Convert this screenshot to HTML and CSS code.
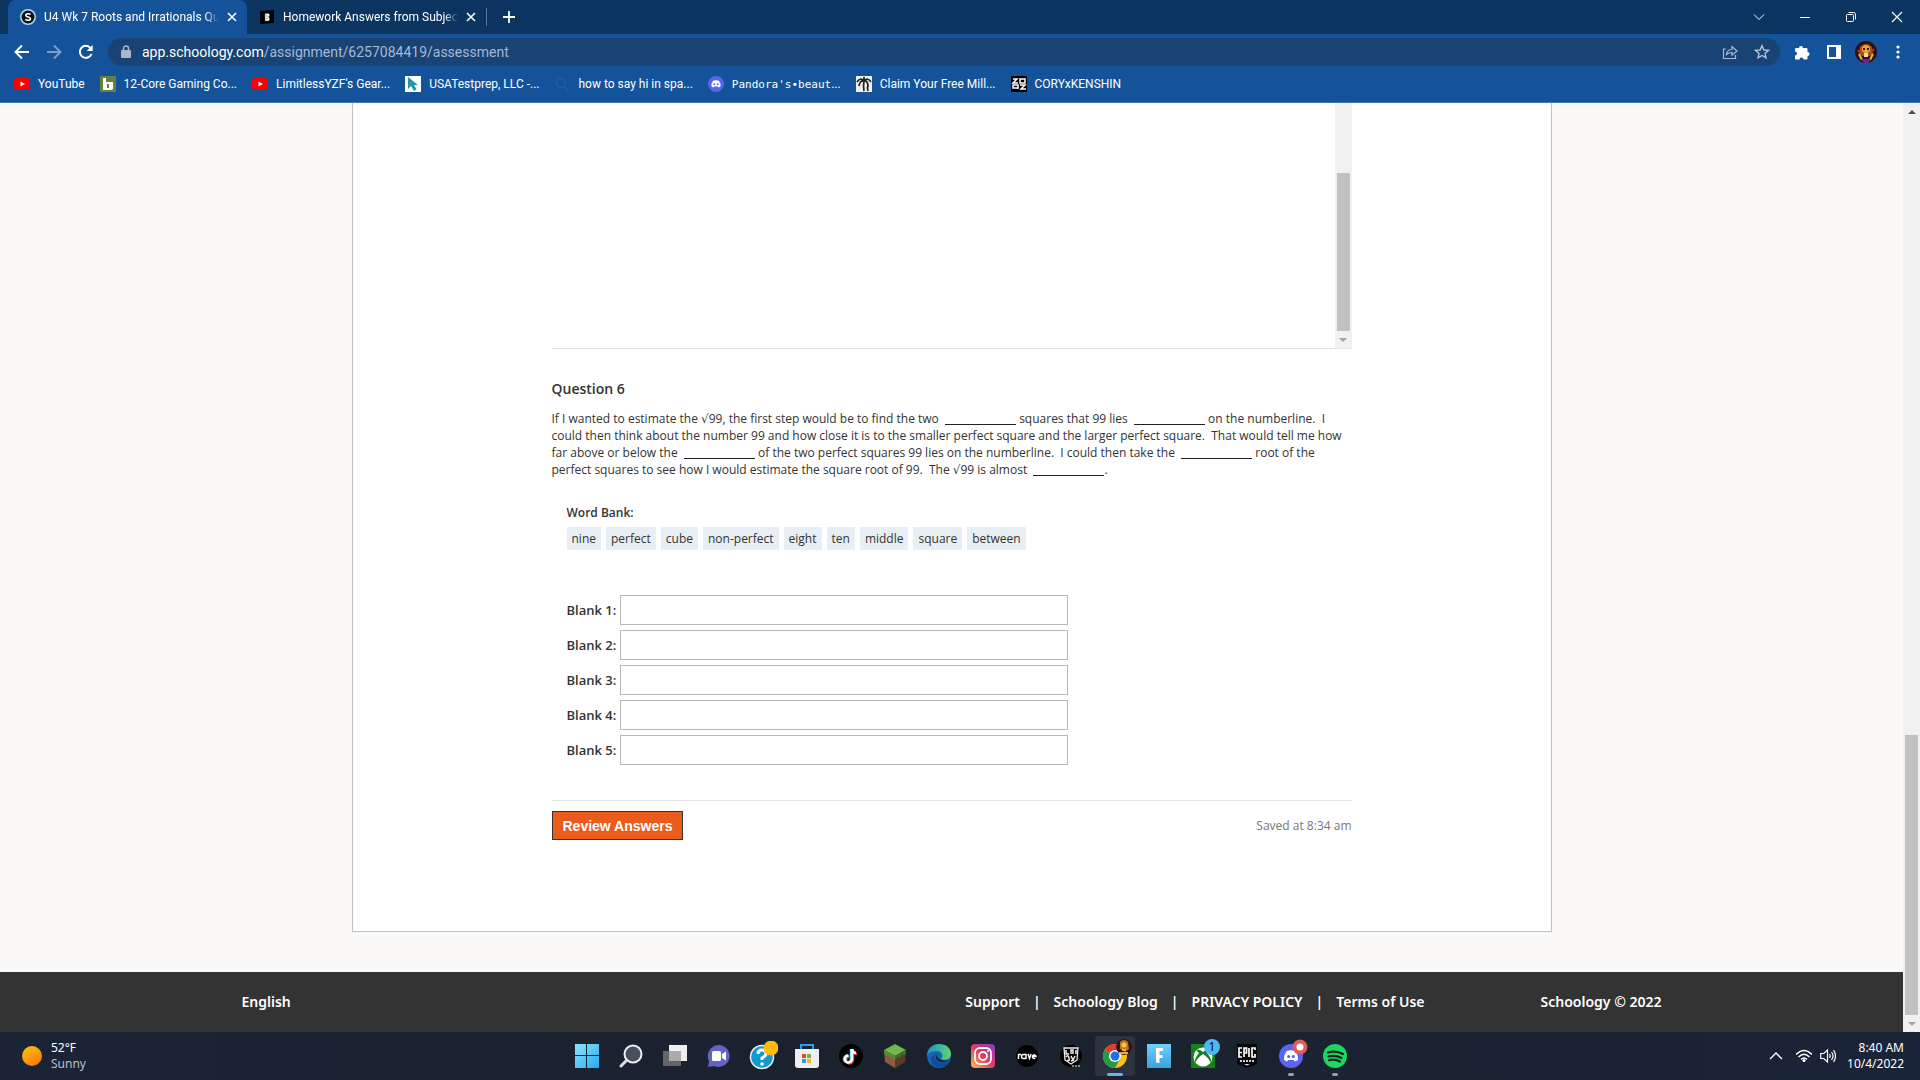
FILE: index.html
```html
<!DOCTYPE html>
<html lang="en">
<head>
    <meta charset="UTF-8">
    <meta name="viewport" content="width=device-width, initial-scale=1.0">
    <title>U4 Wk 7 Roots and Irrationals Quiz</title>
    <link rel="stylesheet" href="styles.css">
</head>
<body>

    <header class="browser">
        <div class="tab-strip">
            <div class="tab active">
                <svg class="icon16" viewBox="0 0 16 16"><circle cx="8" cy="8" r="8" fill="#a9dcf5"/><circle cx="8" cy="8" r="6.5" fill="#111"/><path d="M10.6 5.6C9.6 4.4 5.8 4.3 5.8 6.3c0 2 4.7 1.3 4.7 3.4 0 2.1-4 2-5.1.6" fill="none" stroke="#fff" stroke-width="1.6"/></svg>
                <span class="tab-title">U4 Wk 7 Roots and Irrationals Qu</span>
                <button class="tab-close" aria-label="Close tab"><svg viewBox="0 0 10 10"><path d="M1 1l8 8M9 1l-8 8" stroke="#fff" stroke-width="1.6"/></svg></button>
            </div>
            <div class="tab">
                <svg class="icon16" viewBox="0 0 16 16"><path d="M1 2l14-1v13L1 15z" fill="#000"/><path d="M6 4.500h3.500l1 1v1.500l-1 1 1 1v2l-1 1H6zM7 7h2M7 9.500h2" fill="#fff" stroke="#555" stroke-width=".6"/></svg>
                <span class="tab-title">Homework Answers from Subject</span>
                <button class="tab-close" aria-label="Close tab"><svg viewBox="0 0 10 10"><path d="M1 1l8 8M9 1l-8 8" stroke="#fff" stroke-width="1.6"/></svg></button>
            </div>
            <button class="new-tab" aria-label="New tab"><svg viewBox="0 0 12 12"><path d="M6 0v12M0 6h12" stroke="#fff" stroke-width="1.8"/></svg></button>
            <div class="window-controls">
                <button aria-label="Search tabs"><svg viewBox="0 0 12 12"><path d="M1 3.500l5 5 5-5" fill="none" stroke="#fff"/></svg></button>
                <button aria-label="Minimize"><svg viewBox="0 0 12 12"><path d="M1 6.500h10" stroke="#fff"/></svg></button>
                <button aria-label="Restore"><svg viewBox="0 0 12 12"><rect x="1.500" y="3.500" width="7" height="7" rx="1" fill="none" stroke="#fff"/><path d="M3.500 1.500h5a2 2 0 0 1 2 2v5" fill="none" stroke="#fff"/></svg></button>
                <button aria-label="Close"><svg viewBox="0 0 12 12"><path d="M1 1l10 10M11 1L1 11" stroke="#fff" stroke-width="1.200"/></svg></button>
            </div>
        </div>

        <div class="toolbar">
            <button class="nav" aria-label="Back"><svg viewBox="0 0 16 16"><path d="M15 8H2M8 1.500L1.500 8 8 14.500" fill="none" stroke="#fff" stroke-width="1.900"/></svg></button>
            <button class="nav" aria-label="Forward"><svg viewBox="0 0 16 16"><path d="M1 8h13M8 1.500L14.500 8 8 14.500" fill="none" stroke="#7f9ec9" stroke-width="1.900"/></svg></button>
            <button class="nav" aria-label="Reload"><svg viewBox="0 0 16 16"><path d="M13.500 10A6 6 0 1 1 12.500 4" fill="none" stroke="#fff" stroke-width="2"/><path d="M14.700 1v6H8.700z" fill="#fff"/></svg></button>
            <div class="omnibox">
                <svg class="lock" viewBox="0 0 12 14"><rect x="1" y="5" width="10" height="8" rx="1" fill="#aab7c9"/><path d="M3.500 5V3.500a2.500 2.500 0 0 1 5 0V5" fill="none" stroke="#aab7c9" stroke-width="1.500"/></svg>
                <span class="url">app.schoology.com<span class="path">/assignment/6257084419/assessment</span></span>
                <svg class="icon16" viewBox="0 0 16 16"><path d="M4 5H1.500v9.500h12V11" fill="none" stroke="#a9bbd3" stroke-width="1.200"/><path d="M4.500 10.500c.3-3.500 2.500-5 5.500-5V2.500L15 7l-5 4.200V8.500c-2.500 0-4 .5-5.500 2z" fill="none" stroke="#a9bbd3" stroke-width="1.200"/></svg>
                <svg class="icon16" viewBox="0 0 16 16"><path d="M8 1.800l1.900 4.200 4.500.4-3.400 3 1 4.500L8 11.500l-4 2.400 1-4.500-3.400-3 4.500-.4z" fill="none" stroke="#b4c4d8" stroke-width="1.400"/></svg>
            </div>
            <button class="nav" aria-label="Extensions"><svg viewBox="0 0 16 16"><path d="M5 4a2 2 0 0 1 4 0h3.500a1 1 0 0 1 1 1v3a2 2 0 0 1 0 4v2.500a1 1 0 0 1-1 1H9.500a2 2 0 0 0-4 0H2a1 1 0 0 1-1-1V11.500a2 2 0 0 0 0-4V5a1 1 0 0 1 1-1z" fill="#fff"/></svg></button>
            <button class="nav" aria-label="Side panel"><svg viewBox="0 0 16 16"><rect x="2" y="2" width="12" height="12" fill="none" stroke="#fff" stroke-width="2"/><path d="M10 2h4v12h-4z" fill="#fff"/></svg></button>
            <button class="nav avatar" aria-label="Profile"><svg viewBox="0 0 22 22"><circle cx="11" cy="11" r="11" fill="#2a1119"/><path d="M5 6q6-6 12 0l1 7-3 2H7l-3-2z" fill="#a0521c"/><circle cx="11" cy="8" r="4" fill="#e6a532"/><path d="M8 7h2v2H8zM12 7h2v2h-2z" fill="#46130e"/><path d="M4 13l3 6M18 13l-3 6" stroke="#e8b43a" stroke-width="2"/><path d="M9 12h4v4H9z" fill="#f5d79d"/><path d="M6 18h10l-3 4H9z" fill="#75209b"/><path d="M3 9l2 3M19 8l-2 3" stroke="#bb2b26" stroke-width="2"/></svg></button>
            <button class="nav" aria-label="Menu"><svg viewBox="0 0 16 16"><g fill="#fff"><circle cx="8" cy="3" r="1.600"/><circle cx="8" cy="8" r="1.600"/><circle cx="8" cy="13" r="1.600"/></g></svg></button>
        </div>

        <nav class="bookmarks">
            <a href="#"><svg class="icon16" viewBox="0 0 16 16"><rect y="2" width="16" height="12" rx="3" fill="#f00"/><path d="M6.500 5.500v5L11 8z" fill="#fff"/></svg><span>YouTube</span></a>
            <a href="#"><svg class="icon16" viewBox="0 0 16 16"><path d="M0 0h16v16H0z" fill="#66803f"/><path d="M3 2h3v4h7v7l-2 1H3z" fill="#fff"/><path d="M7 8h2v4H7z" fill="#66803f"/></svg><span>12-Core Gaming Co...</span></a>
            <a href="#"><svg class="icon16" viewBox="0 0 16 16"><rect y="2" width="16" height="12" rx="3" fill="#f00"/><path d="M6.500 5.500v5L11 8z" fill="#fff"/></svg><span>LimitlessYZF's Gear...</span></a>
            <a href="#"><svg class="icon16" viewBox="0 0 16 16"><path d="M0 0h16v16H0z" fill="#fff"/><path d="M3 1v12l3-3 3 5 2.500-1.500L9 9h4z" fill="#2396a8"/></svg><span>USATestprep, LLC -...</span></a>
            <a href="#"><svg class="icon16" viewBox="0 0 16 16"><circle cx="7" cy="7" r="4.500" fill="none" stroke="#1262b2" stroke-width="1.500"/><path d="M10 10l4 4" stroke="#1262b2" stroke-width="1.500"/></svg><span>how to say hi in spa...</span></a>
            <a href="#"><svg class="icon16" viewBox="0 0 16 16"><circle cx="8" cy="8" r="8" fill="#5865f2"/><path d="M5 4.800q3-1 6 0Q12.800 7.500 12.500 10.500L10.500 11.500 9.800 10.500H6.200L5.500 11.500 3.500 10.500Q3.200 7.500 5 4.800z" fill="#fff"/><circle cx="6.400" cy="8.300" r="1" fill="#5865f2"/><circle cx="9.600" cy="8.300" r="1" fill="#5865f2"/></svg><span><span class="mono">Pandora's•beaut</span>...</span></a>
            <a href="#"><svg class="icon16" viewBox="0 0 16 16"><path d="M0 0h16v16H0z" fill="#eee"/><path d="M8 5q-1 5 0 10M8 5Q4 1 1 6M8 5Q4 4 3 10M8 5q4-4 7 1M8 5q4-1 4 6M8 5V1M12 8q-1 4 0 7" fill="none" stroke="#222" stroke-width="1.700"/></svg><span>Claim Your Free Mill...</span></a>
            <a href="#"><svg class="icon16" viewBox="0 0 16 16"><path d="M0 0h16v16H0z" fill="#000"/><path d="M2 3h4L2 7h5M9 3h5v4H9zM7 13V9H2v3h5M9 9h5l-4 4h5" fill="none" stroke="#fff" stroke-width="1.500"/></svg><span>CORYxKENSHIN</span></a>
        </nav>
    </header>

    <div class="viewport">
        <div class="page">
            <main class="card">
                <div class="quiz">
                    <div class="question-frame">
                        <div class="scrollbar">
                            <div class="track"><div class="thumb"></div></div>
                            <div class="arrow down"></div>
                        </div>
                    </div>

                    <h2>Question 6</h2>
                    <p class="prompt">If I wanted to estimate the <span class="root">√</span>99, the first step would be to find the two&nbsp; <span class="gap"></span> squares that 99 lies&nbsp; <span class="gap"></span> on the numberline.&nbsp; I could then think about the number 99 and how close it is to the smaller perfect square and the larger perfect square.&nbsp; That would tell me how far above or below the&nbsp; <span class="gap"></span> of the two perfect squares 99 lies on the numberline.&nbsp; I could then take the&nbsp; <span class="gap"></span> root of the perfect squares to see how I would estimate the square root of 99.&nbsp; The <span class="root">√</span>99 is almost&nbsp; <span class="gap"></span>.</p>

                    <section class="answers">
                        <h3>Word Bank:</h3>
                        <ul class="word-bank">
                            <li>nine</li>
                            <li>perfect</li>
                            <li>cube</li>
                            <li>non-perfect</li>
                            <li>eight</li>
                            <li>ten</li>
                            <li>middle</li>
                            <li>square</li>
                            <li>between</li>
                        </ul>

                        <div class="blank"><label for="blank1">Blank 1:</label><input type="text" id="blank1"></div>
                        <div class="blank"><label for="blank2">Blank 2:</label><input type="text" id="blank2"></div>
                        <div class="blank"><label for="blank3">Blank 3:</label><input type="text" id="blank3"></div>
                        <div class="blank"><label for="blank4">Blank 4:</label><input type="text" id="blank4"></div>
                        <div class="blank"><label for="blank5">Blank 5:</label><input type="text" id="blank5"></div>
                    </section>

                    <div class="submit-row">
                        <button class="review">Review Answers</button>
                        <span class="saved">Saved at 8:34 am</span>
                    </div>
                </div>
            </main>

            <footer class="site-footer">
                <div class="footer-inner">
                    <a href="#">English</a>
                    <nav class="footer-links">
                        <a href="#">Support</a><span>|</span>
                        <a href="#">Schoology Blog</a><span>|</span>
                        <a href="#">PRIVACY POLICY</a><span>|</span>
                        <a href="#">Terms of Use</a>
                    </nav>
                    <span>Schoology © 2022</span>
                </div>
            </footer>
        </div>
        <div class="scrollbar page-scroll">
            <div class="arrow up"></div>
            <div class="track"><div class="thumb"></div></div>
            <div class="arrow down"></div>
        </div>
    </div>

    <div class="taskbar">
        <div class="weather">
            <span class="sun"></span>
            <div>52°F<br><span class="sky">Sunny</span></div>
        </div>

        <div class="apps">
            <button aria-label="Start"><svg viewBox="0 0 24 24"><defs><linearGradient id="win" x2="1" y2="1"><stop stop-color="#8be4ff"/><stop offset="1" stop-color="#28a8f0"/></linearGradient></defs><path d="M0 0h11v11H0zM12 0h12v11H12zM0 12h11v12H0zM12 12h12v12H12z" fill="url(#win)"/></svg></button>
            <button aria-label="Search"><svg viewBox="0 0 24 24"><path d="M8 16l-6 6" stroke="#ddd" stroke-width="3" stroke-linecap="round"/><circle cx="14" cy="10" r="8.500" fill="#47505d" stroke="#eee" stroke-width="2"/></svg></button>
            <button aria-label="Task view"><svg viewBox="0 0 24 24"><path d="M6 1h18v16H6z" fill="#eee"/><path d="M0 7h18v15H0z" fill="#777" opacity=".8"/><path d="M6 7h12v10H6z" fill="#aaa"/></svg></button>
            <button aria-label="Chat"><svg viewBox="0 0 24 24"><path d="M12 1a11 11 0 1 1-5 21L1 23l1-6A11 11 0 0 1 12 1z" fill="#6263c5"/><rect x="5" y="7" width="9" height="10" rx="1.500" fill="#fff"/><path d="M15 10l4-2.500v9L15 14z" fill="#fff"/></svg></button>
            <button aria-label="Get help"><svg class="wide" viewBox="0 0 30 30"><circle cx="14" cy="16" r="11.500" fill="#1299cf" stroke="#eee" stroke-width="1.500"/><path d="M10 13q0-4 4-4t4 3.500q0 2.500-4 4.500v2" fill="none" stroke="#fff" stroke-width="3"/><circle cx="14" cy="23" r="1.800" fill="#fff"/><circle cx="23" cy="7" r="7.500" fill="#ffb90f"/></svg></button>
            <button aria-label="Store"><svg viewBox="0 0 24 24"><path d="M6 6V1h12v5" fill="none" stroke="#2aa0e8" stroke-width="2"/><path d="M0 5h24v16a3 3 0 0 1-3 3H3a3 3 0 0 1-3-3z" fill="#eee"/><path d="M7 10h4v4H7z" fill="#e34c2a"/><path d="M12 10h4v4h-4z" fill="#73b52c"/><path d="M7 15h4v4H7z" fill="#2a9fdf"/><path d="M12 15h4v4h-4z" fill="#f5b81c"/></svg></button>
            <button aria-label="TikTok"><svg viewBox="0 0 24 24"><circle cx="12" cy="12" r="12" fill="#000"/><g fill="none" stroke-width="2.500"><path d="M13 5v10a3.500 3.500 0 1 1-3.500-3.500M13 5q1 4 4 4" stroke="#f33757" transform="translate(1 1)"/><path d="M12 5v10a3.500 3.500 0 1 1-3.500-3.500" stroke="#48e9e4"/><path d="M13 5v10a3.500 3.500 0 1 1-3.500-3.500M13 5q1 4 4 4" stroke="#fff"/></g></svg></button>
            <button aria-label="Minecraft"><svg viewBox="0 0 24 24"><path d="M12 0l11 6-11 6L1 6z" fill="#72b74c"/><path d="M1 6l11 6v12L2 18z" fill="#8b5b40"/><path d="M23 6l-11 6v12l10-6z" fill="#5d3a27"/><path d="M1 6l11 6v4l-3-3-2 1-2-3-2 1-2-3z" fill="#518d36"/><path d="M23 6l-11 6v4l3-3 2 1 2-4 3 1z" fill="#3f712c"/></svg></button>
            <button aria-label="Edge"><svg viewBox="0 0 24 24"><defs><linearGradient id="edge" x2="1"><stop stop-color="#1b8dd8"/><stop offset="1" stop-color="#61d867"/></linearGradient></defs><circle cx="12" cy="12" r="12" fill="#1765b6"/><path d="M0 12C0 4 6 0 12 0c7 0 12 4 12 10 0 5-6 7-10 5 3-3 1-8-4-8C5 7 1 9 0 12z" fill="url(#edge)"/><path d="M10 10c-4 4-1 9 5 9 4 0 6-1 8-3-4 10-17 9-19 1 0-4 3-7 6-7z" fill="#154a98"/><path d="M11 10q-2 3 1 5 5 3 11 0-4 4-9 3c-6-1-6-6-3-8z" fill="#1c2330"/></svg></button>
            <button aria-label="Instagram"><svg viewBox="0 0 24 24"><defs><linearGradient id="insta" x1="0" y1="1" x2="1" y2="0"><stop stop-color="#fdc24b"/><stop offset=".5" stop-color="#e23965"/><stop offset="1" stop-color="#7d3bd0"/></linearGradient></defs><rect width="24" height="24" rx="4" fill="url(#insta)"/><rect x="4" y="4" width="16" height="16" rx="5" fill="none" stroke="#fff" stroke-width="1.800"/><circle cx="12" cy="12" r="4" fill="none" stroke="#fff" stroke-width="1.800"/><circle cx="17" cy="7" r="1" fill="#fff"/></svg></button>
            <button aria-label="Rave"><svg viewBox="0 0 24 24"><circle cx="12" cy="12" r="11" fill="#000"/><path d="M3.500 15v-4.500h2.500M11 15v-4.500H8.500a2 2 0 0 0 0 4h2.500M13 10l1.500 4.500L16 10M18 12.500h3a1.800 1.800 0 1 0-.8 1.800" fill="none" stroke="#fff" stroke-width="1.500"/></svg></button>
            <button aria-label="Beta app"><svg viewBox="0 0 24 24"><circle cx="12" cy="12" r="11" fill="#000"/><path d="M5 4h14l-1 12-6 4-6-4z" fill="none" stroke="#eee" stroke-width="1.300"/><path d="M7 6v4h3M12 10V6h2v4M17 6v4M7 13q2-3 3 1t-2 2M12 12l2 4 2-4M12 17l3-1" fill="none" stroke="#eee" stroke-width="1.500"/><path d="M13 22h9" stroke="#aaa" stroke-width="1.500" stroke-dasharray="2 1"/></svg></button>
            <button class="current" aria-label="Chrome"><svg viewBox="0 0 24 24"><circle cx="12" cy="12" r="12" fill="#fbc116"/><path d="M12 12L1.600 6A12 12 0 0 1 22.400 6z" fill="#e33b2e"/><path d="M12 12L1.600 6A12 12 0 0 0 12 24l5-9z" fill="#229b4c"/><circle cx="12" cy="12" r="6" fill="#fff"/><circle cx="12" cy="12" r="4.500" fill="#1a73e8"/></svg><svg class="badge" viewBox="0 0 16 16"><circle cx="8" cy="8" r="8" fill="#2b1110"/><path d="M4 3q4-4 8 0l1 7-4 3-5-3z" fill="#bd741c"/><circle cx="8" cy="6" r="2.500" fill="#f5c451"/><path d="M6 11h4M3 14h9" stroke="#e7aa3c" stroke-width="2"/></svg></button>
            <button aria-label="Fortnite"><svg viewBox="0 0 24 24"><defs><linearGradient id="fn" x2="0" y2="1"><stop stop-color="#6bd1fa"/><stop offset="1" stop-color="#3aa1dc"/></linearGradient></defs><path d="M0 0h24v24H0z" fill="url(#fn)"/><path d="M9 4h7v3h-3.500v4h3v3h-3v5L9 18.500z" fill="#fff"/></svg></button>
            <button aria-label="Xbox"><svg viewBox="0 0 24 24"><path d="M0 0h24v24H0z" fill="#168117"/><circle cx="12" cy="13" r="9.500" fill="#fff"/><path d="M5 6q4-1 7 2 3-3 7-2l-3 3q5 6 4 10-3-6-8-9-5 3-8 9-1-4 4-10z" fill="#168117"/></svg><span class="badge count">1</span></button>
            <button aria-label="Epic Games"><svg viewBox="0 0 24 24"><path d="M2 0h20v20l-10 4L2 20z" fill="#080808"/><path d="M7 4H4v9h3M4 8.500h3M9 13V4h2.500v5H9M14 4v9M20 6V4h-3v9h3v-3" fill="none" stroke="#fff" stroke-width="1.700"/><path d="M5 17h14" stroke="#ccc" stroke-width="2" stroke-dasharray="2 1"/><path d="M9 20h6l-3 1.500z" fill="#ddd"/></svg></button>
            <button class="running" aria-label="Discord"><svg viewBox="0 0 24 24"><circle cx="12" cy="12" r="12" fill="#5865f2"/><path d="M7.500 7q4.500-1.500 9 0Q19.500 11.500 19 16l-3 1.500L14.700 16H9.300L8 17.500 5 16Q4.500 11.500 7.500 7z" fill="#fff"/><circle cx="9.700" cy="12.500" r="1.500" fill="#5865f2"/><circle cx="14.300" cy="12.500" r="1.500" fill="#5865f2"/></svg><svg class="badge" viewBox="0 0 16 16"><circle cx="8" cy="8" r="7.500" fill="#e25b58"/><circle cx="8" cy="8" r="3.500" fill="#fff"/></svg></button>
            <button class="running" aria-label="Spotify"><svg viewBox="0 0 24 24"><circle cx="12" cy="12" r="12" fill="#1ed760"/><path d="M5 8.500q8-2.500 15 1.500M5.500 12.500q7-2 13 1.500M6 16.200q6-1.700 11 1.300" fill="none" stroke="#10251a" stroke-width="2.200" stroke-linecap="round"/></svg></button>
        </div>

        <div class="tray">
            <svg class="chevron" viewBox="0 0 16 16"><path d="M2 11l6-6 6 6" fill="none" stroke="#fff" stroke-width="1.400"/></svg>
            <svg viewBox="0 0 16 16"><g fill="none" stroke="#fff" stroke-width="1.300"><path d="M0 6.500q8-8 16 0M2.500 9q5.500-5.500 11 0M5 11.500q3-3 6 0"/></g><circle cx="8" cy="12.500" r="1.500" fill="#fff"/></svg>
            <svg viewBox="0 0 16 16"><path d="M.7 5.500h3L7.500 2v12L3.700 10.500h-3z" fill="none" stroke="#fff" stroke-width="1.200"/><path d="M9.500 6q1.500 2 0 4M11.500 4q3 4 0 8M13.500 2q4 6 0 12" fill="none" stroke="#fff" stroke-width="1.200"/></svg>
            <div class="clock">8:40 AM<br>10/4/2022</div>
        </div>
    </div>

</body>
</html>
```

FILE: styles.css
```css
/* Base */
* {
    box-sizing: border-box;
}

body {
    margin: 0;
    height: 100vh;
    display: flex;
    flex-direction: column;
    overflow: hidden;
    font-family: "Open Sans", sans-serif;
    font-size: 12px;
    color: #333;
}

button {
    padding: 0;
    border: 0;
    background: none;
    font: inherit;
}

svg {
    display: block;
    flex: none;
}

a {
    color: inherit;
    text-decoration: none;
}

.icon16 {
    width: 16px;
    height: 16px;
}

/* Browser chrome */
.browser {
    background: #14539a;
    color: #fff;
    font-family: Roboto, sans-serif;
    border-bottom: 1px solid #3a76b8;
}

.tab-strip {
    height: 34px;
    display: flex;
    align-items: center;
    padding-left: 8px;
    background: #0b3560;
}

.tab {
    width: 239px;
    height: 34px;
    display: flex;
    align-items: center;
    gap: 8px;
    padding: 0 10px 0 12px;
}

.tab.active {
    background: #14539a;
    border-radius: 8px 8px 0 0;
}

.tab-title {
    flex: 1;
    overflow: hidden;
    white-space: nowrap;
    mask-image: linear-gradient(to right, #000 92%, transparent);
}

.tab-close {
    width: 10px;
}

.new-tab {
    height: 18px;
    padding: 0 16px;
    border-left: 1px solid #5b7896;
}

.new-tab svg {
    width: 12px;
}

.window-controls {
    display: flex;
    height: 28px;
    margin-left: auto;
}

.window-controls button {
    width: 46px;
    display: grid;
    place-items: center;
}

.window-controls svg {
    width: 12px;
}

.toolbar {
    display: flex;
    align-items: center;
    height: 36px;
    padding: 0 6px;
}

.nav {
    width: 32px;
    height: 28px;
    display: grid;
    place-items: center;
}

.nav svg {
    width: 16px;
}

.avatar svg {
    width: 22px;
}

.omnibox {
    flex: 1;
    height: 28px;
    display: flex;
    align-items: center;
    gap: 16px;
    margin: 0 6px;
    padding: 0 10px 0 12px;
    border-radius: 14px;
    background: #184374;
    font-size: 14px;
}

.lock {
    width: 12px;
}

.url {
    flex: 1;
    margin-left: -6px;
}

.path {
    color: #a5b9d2;
}

.bookmarks {
    display: flex;
    align-items: center;
    gap: 15px;
    height: 32px;
    padding: 0 14px 4px;
}

.bookmarks a {
    display: flex;
    align-items: center;
    gap: 8px;
    white-space: nowrap;
}

.mono {
    font-family: "DejaVu Sans Mono", monospace;
    font-size: 11px;
}

/* Page */
.viewport {
    flex: 1;
    min-height: 0;
    display: flex;
    background: #faf9f7;
}

.page {
    flex: 1;
    display: flex;
    flex-direction: column;
    align-items: center;
    min-width: 0;
}

.card {
    width: 100%;
    max-width: 1200px;
    padding-bottom: 91px;
    border: 1px solid #c2c2c2;
    border-top: 0;
    background: #fff;
}

.quiz {
    max-width: 800px;
    margin: 0 auto;
}

.question-frame {
    height: 246px;
    display: flex;
    justify-content: flex-end;
    border-bottom: 1px solid #e4e4e4;
}

h2 {
    margin: 29px 0 10px;
    font-size: 14px;
    line-height: 22px;
    font-weight: 600;
}

.prompt {
    margin: 0;
    line-height: 17px;
}

.root {
    font-family: "DejaVu Sans", sans-serif;
    line-height: 1;
}

.gap {
    display: inline-block;
    width: 71px;
    height: 11px;
    border-bottom: 1px solid #222;
    vertical-align: -2px;
}

.answers {
    padding: 25px 15px 0;
}

h3 {
    margin: 0;
    font-size: 12px;
    line-height: 20px;
    font-weight: 600;
}

.word-bank {
    display: flex;
    gap: 5px;
    margin: 4px 0 45px;
    padding: 0;
    list-style: none;
}

.word-bank li {
    padding: 0 5px;
    line-height: 23px;
    background: #e8eff4;
}

.blank {
    display: flex;
    align-items: center;
    gap: 4px;
    margin-bottom: 5px;
    font-size: 13px;
    font-weight: 600;
}

.blank input {
    width: 448px;
    height: 30px;
    border: 1px solid #b9b9b9;
}

.submit-row {
    display: flex;
    justify-content: space-between;
    align-items: center;
    margin-top: 35px;
    padding-top: 10px;
    border-top: 1px solid #e4e4e4;
}

.review {
    height: 29px;
    padding: 0 10px;
    border: 1px solid #333;
    background: #ea5b1c;
    color: #fff;
    font-family: "Liberation Sans", Arial, sans-serif;
    font-size: 14px;
    font-weight: bold;
}

.saved {
    color: #777;
}

.site-footer {
    width: 100%;
    margin-top: auto;
    background: #333;
    color: #fff;
    font-family: "Noto Sans", sans-serif;
    font-size: 14px;
    font-weight: 600;
}

.footer-inner {
    display: flex;
    align-items: center;
    max-width: 1420px;
    height: 60px;
    margin: 0 auto;
    padding-bottom: 2px;
}

.footer-links {
    display: flex;
    gap: 13px;
    margin-left: auto;
    margin-right: 116px;
}

/* Scrollbars */
.scrollbar {
    width: 17px;
    display: flex;
    flex-direction: column;
    background: #f1f1f1;
}

.track {
    flex: 1;
    display: flex;
    flex-direction: column;
    justify-content: flex-end;
    padding: 0 2px;
}

.thumb {
    height: 158px;
    background: #c1c1c1;
}

.page-scroll .thumb {
    height: 280px;
}

.arrow {
    height: 17px;
    display: grid;
    place-items: center;
}

.arrow::before {
    content: '';
    border: 4px solid transparent;
}

.arrow.up::before {
    border-top: 0;
    border-bottom-color: #505050;
}

.arrow.down::before {
    border-bottom: 0;
    border-top-color: #a3a3a3;
}

/* Taskbar */
.taskbar {
    display: grid;
    grid-template-columns: 1fr auto 1fr;
    align-items: center;
    height: 48px;
    padding: 0 16px 0 18px;
    background: linear-gradient(to right, #1a2436, #1b222d 50%, #1a2438);
    color: #fff;
    font-family: "Noto Sans", sans-serif;
    line-height: 16px;
}

.weather {
    display: flex;
    align-items: center;
    gap: 9px;
    padding-left: 4px;
}

.sun {
    width: 20px;
    height: 20px;
    border-radius: 50%;
    background: linear-gradient(150deg, #ffc20e, #f7720c);
}

.sky {
    color: #b9c0cb;
}

.apps {
    display: flex;
    gap: 4px;
}

.apps button {
    position: relative;
    width: 40px;
    height: 40px;
    display: grid;
    place-items: center;
    border-radius: 4px;
    color: #111;
}

.apps svg {
    width: 24px;
}

.apps .wide {
    width: 30px;
}

.apps .badge {
    position: absolute;
    top: 3px;
    right: 3px;
    width: 16px;
    height: 16px;
    border-radius: 50%;
}

.count {
    background: #4cb8f0;
}

.apps .current {
    background: #2d333e;
}

.current::after,
.running::after {
    content: '';
    position: absolute;
    bottom: 0;
    width: 6px;
    height: 3px;
    border-radius: 2px;
    background: #9aa0a8;
}

.current::after {
    width: 16px;
    background: #5fb8ee;
}

.tray {
    display: flex;
    align-items: center;
    justify-content: flex-end;
    gap: 8px;
}

.tray svg {
    width: 16px;
}

.tray .chevron {
    margin-right: 4px;
}

.clock {
    margin-left: 3px;
    text-align: right;
}
```
